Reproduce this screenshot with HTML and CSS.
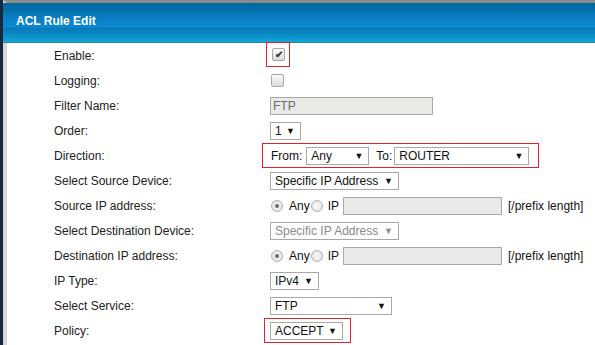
FILE: index.html
```html
<!DOCTYPE html>
<html lang="en">

<head>
    <meta charset="UTF-8">
    <meta name="viewport" content="width=device-width, initial-scale=1.0">
    <title>ACL Rule Edit</title>
    <link rel="stylesheet" href="styles.css">
</head>

<body>
    <div class="frame">
        <div class="dialog">
            <div class="dialog-header">ACL Rule Edit</div>

            <div class="dialog-body">
                <div class="row">
                    <div class="label">Enable:</div>
                    <div class="field">
                        <span class="mark mark-first">
                            <span class="check checked">&#10004;</span>
                        </span>
                    </div>
                </div>

                <div class="row">
                    <div class="label">Logging:</div>
                    <div class="field"><span class="check"></span></div>
                </div>

                <div class="row">
                    <div class="label">Filter Name:</div>
                    <div class="field"><div class="text-input readonly name-input">FTP</div></div>
                </div>

                <div class="row">
                    <div class="label">Order:</div>
                    <div class="field">
                        <div class="select w-order"><span>1</span><span class="arrow">&#9660;</span></div>
                    </div>
                </div>

                <div class="row">
                    <div class="label">Direction:</div>
                    <div class="field">
                        <div class="mark mark-direction">
                            <span class="inline-label">From:</span>
                            <div class="select w-from"><span>Any</span><span class="arrow">&#9660;</span></div>
                            <span class="inline-label to-label">To:</span>
                            <div class="select w-to"><span>ROUTER</span><span class="arrow">&#9660;</span></div>
                        </div>
                    </div>
                </div>

                <div class="row">
                    <div class="label">Select Source Device:</div>
                    <div class="field">
                        <div class="select w-device"><span>Specific IP Address</span><span class="arrow">&#9660;</span></div>
                    </div>
                </div>

                <div class="row">
                    <div class="label">Source IP address:</div>
                    <div class="field">
                        <span class="radio on"></span><span class="radio-text">Any</span>
                        <span class="radio"></span><span class="radio-text ip-text">IP</span>
                        <div class="text-input readonly ip-input"></div>
                        <span class="hint">[/prefix length]</span>
                    </div>
                </div>

                <div class="row">
                    <div class="label">Select Destination Device:</div>
                    <div class="field">
                        <div class="select w-device disabled"><span>Specific IP Address</span><span class="arrow">&#9660;</span></div>
                    </div>
                </div>

                <div class="row">
                    <div class="label">Destination IP address:</div>
                    <div class="field">
                        <span class="radio on"></span><span class="radio-text">Any</span>
                        <span class="radio"></span><span class="radio-text ip-text">IP</span>
                        <div class="text-input readonly ip-input"></div>
                        <span class="hint">[/prefix length]</span>
                    </div>
                </div>

                <div class="row">
                    <div class="label">IP Type:</div>
                    <div class="field">
                        <div class="select w-iptype"><span>IPv4</span><span class="arrow">&#9660;</span></div>
                    </div>
                </div>

                <div class="row">
                    <div class="label">Select Service:</div>
                    <div class="field">
                        <div class="select w-service"><span>FTP</span><span class="arrow">&#9660;</span></div>
                    </div>
                </div>

                <div class="row">
                    <div class="label">Policy:</div>
                    <div class="field">
                        <span class="mark mark-policy">
                            <div class="select w-policy"><span>ACCEPT</span><span class="arrow">&#9660;</span></div>
                        </span>
                    </div>
                </div>
            </div>
        </div>
    </div>
</body>

</html>
```

FILE: styles.css
```css
html,
body {
    margin: 0;
    padding: 0;
    height: 100%;
    overflow: hidden;
}

body {
    font-family: Arial, "Liberation Sans", sans-serif;
    font-size: 12px;
    color: #222;
    background: #fff;
}

.frame {
    height: 100%;
    border-left: 3px solid #14283f;
    box-sizing: border-box;
}

.dialog {
    height: 100%;
    border-left: 4px solid #d6d6d6;
    border-top: 3px solid #8a8a8a;
    box-sizing: border-box;
}

.dialog-header {
    height: 39px;
    margin-left: -4px;
    padding-left: 13px;
    line-height: 37px;
    color: #fff;
    font-weight: bold;
    font-size: 12px;
    border-bottom: 1px solid #2b8b9c;
    background: linear-gradient(to bottom,
            #00659a 0%,
            #0a80c4 40%,
            #0a88d0 62%,
            #0977b8 64%,
            #0a8ac6 80%,
            #12a6d8 100%);
}

.dialog-body {
    padding-left: 47px;
}

.row {
    display: flex;
    align-items: center;
    height: 25px;
}

.label {
    width: 216px;
    flex-shrink: 0;
}

.field {
    display: flex;
    align-items: center;
    white-space: nowrap;
}

/* red highlight boxes */
.mark {
    display: flex;
    align-items: center;
    flex-shrink: 0;
    border: 1px solid #e0242c;
    box-sizing: border-box;
    height: 25px;
}

.mark-first {
    margin-left: -4px;
    width: 24px;
    padding-left: 4px;
    margin-top: -2px;
}

.mark-direction {
    margin-left: -8px;
    padding: 0 9px 0 8px;
}

.mark-policy {
    margin-left: -6px;
    width: 87px;
    padding-left: 5px;
}

.check {
    display: inline-block;
    width: 11px;
    height: 11px;
    margin-left: 1px;
    border: 1px solid #a8a8a8;
    border-radius: 2px;
    background: linear-gradient(#fbfbfb, #dcdcdc);
    font-size: 10px;
    line-height: 11px;
    text-align: center;
    overflow: hidden;
}

.checked {
    color: #3a3a3a;
    font-weight: bold;
}

.text-input {
    height: 16px;
    border: 1px solid #a9a9a9;
    padding: 0 2px;
    line-height: 16px;
}

.readonly {
    background: #e9e9e5;
    color: #6c6c6c;
}

.name-input {
    width: 157px;
}

.ip-input {
    width: 153px;
    margin-left: 4px;
}

.select {
    display: flex;
    align-items: center;
    justify-content: space-between;
    flex-shrink: 0;
    height: 16px;
    border: 1px solid #a9a9a9;
    background: #fff;
    padding: 0 5px 0 4px;
    color: #111;
}

.select .arrow {
    font-size: 9px;
    color: #111;
}

.select.disabled,
.select.disabled .arrow {
    color: #8a8a8a;
}

.w-order { width: 20px; }
.w-from { width: 52px; margin-left: 4px; }
.w-to { width: 124px; }
.w-device { width: 118px; }
.w-iptype { width: 38px; }
.w-service { width: 111px; }
.w-policy { width: 62px; }

.inline-label {
    color: #111;
}

.to-label {
    margin-left: 7px;
    margin-right: 2px;
}

.radio {
    display: inline-block;
    width: 10px;
    height: 10px;
    margin-left: 1px;
    border: 1px solid #b0b0b0;
    border-radius: 50%;
    background: radial-gradient(circle, #fafafa 0%, #dedede 100%);
    position: relative;
}

.radio.on::after {
    content: "";
    position: absolute;
    left: 3px;
    top: 3px;
    width: 4px;
    height: 4px;
    border-radius: 50%;
    background: #6a6a6a;
}

.radio-text {
    color: #111;
    margin-left: 6px;
}

.ip-text {
    margin-left: 5px;
}

.hint {
    color: #111;
    margin-left: 6px;
}
```
